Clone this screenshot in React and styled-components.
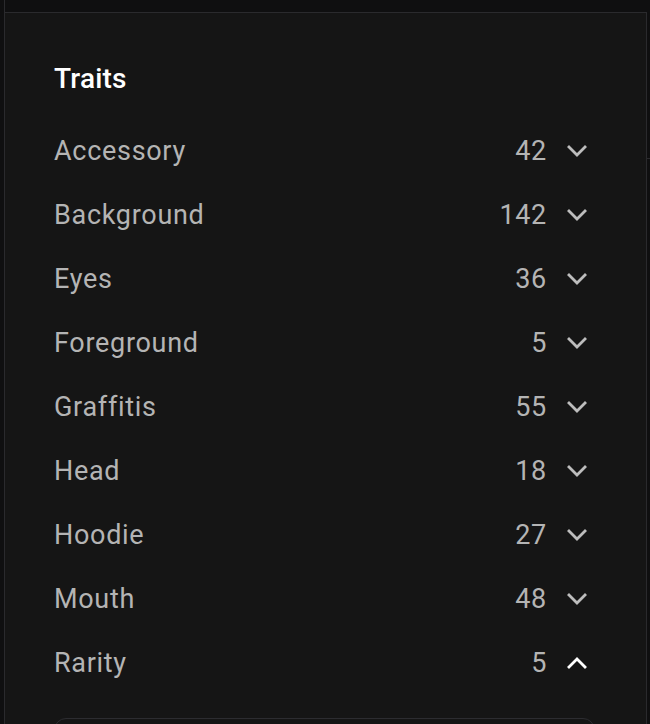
import styled, { createGlobalStyle } from "styled-components";

const traits = [
  { name: "Accessory", count: 42 },
  { name: "Background", count: 142 },
  { name: "Eyes", count: 36 },
  { name: "Foreground", count: 5 },
  { name: "Graffitis", count: 55 },
  { name: "Head", count: 18 },
  { name: "Hoodie", count: 27 },
  { name: "Mouth", count: 48 },
  { name: "Rarity", count: 5, open: true },
];

const GlobalStyle = createGlobalStyle`
  html, body {
    margin: 0;
    padding: 0;
    background: #0f0f10;
    overflow: hidden;
  }
  body {
    font-family: Roboto, "Liberation Sans", sans-serif;
    -webkit-font-smoothing: antialiased;
  }
`;

const Page = styled.div`
  display: flex;
  height: 724px;
  padding-left: 4px;
`;

const Column = styled.div`
  display: flex;
  flex-direction: column;
  width: 642px;
  border-left: 1px solid #2a2a2d;
`;

const TopStrip = styled.div`
  height: 12px;
  flex-shrink: 0;
`;

const Panel = styled.section`
  flex: 1;
  background: #151515;
  border-top: 1px solid #2a2a2d;
  border-right: 1px solid #2a2a2d;
  padding: 49px 51px 0 49px;
  overflow: hidden;
`;

const SideStrip = styled.div`
  flex: 1;
  padding-top: 158px;
`;

const SideEdge = styled.div`
  border-top: 1px solid #2a2a2d;
`;

const Title = styled.h2`
  margin: 0 0 23px;
  font-size: 28px;
  line-height: 34px;
  font-weight: 500;
  color: #ffffff;
  letter-spacing: 0.2px;
`;

const List = styled.ul`
  list-style: none;
  margin: 0;
  padding: 0;
`;

const Row = styled.li`
  display: flex;
  align-items: center;
  height: 64px;
  color: #b4b4b4;
  font-size: 27px;
  letter-spacing: 0.7px;
`;

const Name = styled.span`
  flex: 1;
`;

const Count = styled.span`
  margin-right: 20px;
`;

const Chevron = styled.svg`
  width: 20px;
  height: 20px;
  margin-right: 8px;
  color: ${(p) => (p.$open ? "#ffffff" : "#bdbdbd")};
`;

const SearchBox = styled.div`
  margin-top: 23px;
  height: 48px;
  border: 1px solid #2c2c30;
  border-radius: 12px;
`;

function ChevronIcon({ open }) {
  return (
    <Chevron $open={open} viewBox="0 0 20 20" fill="none">
      <path
        d={open ? "M2 14 L10 6 L18 14" : "M2 6 L10 14 L18 6"}
        stroke="currentColor"
        strokeWidth="2.8"
        strokeLinecap="square"
        strokeLinejoin="miter"
      />
    </Chevron>
  );
}

export default function App() {
  return (
    <>
      <GlobalStyle />
      <Page>
        <Column>
          <TopStrip />
          <Panel>
            <Title>Traits</Title>
            <List>
              {traits.map((t) => (
                <Row key={t.name}>
                  <Name>{t.name}</Name>
                  <Count>{t.count}</Count>
                  <ChevronIcon open={t.open} />
                </Row>
              ))}
            </List>
            <SearchBox />
          </Panel>
        </Column>
        <SideStrip>
          <SideEdge />
        </SideStrip>
      </Page>
    </>
  );
}
